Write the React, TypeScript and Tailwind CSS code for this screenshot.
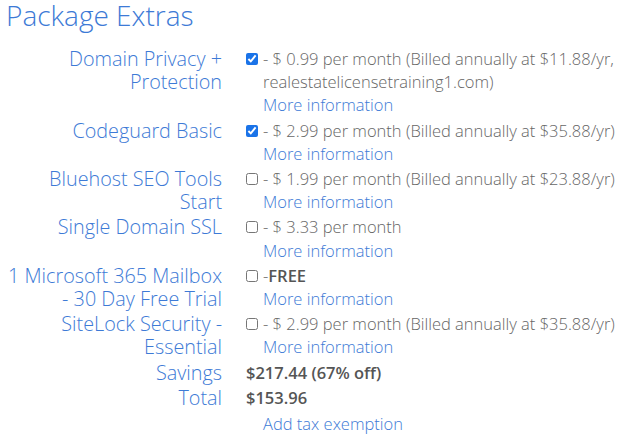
import React from "react";

type Row = {
  label: string;
  checked?: boolean;
  desc?: React.ReactNode;
};

const rows: Row[] = [
  {
    label: "Domain Privacy + Protection",
    checked: true,
    desc: "- $ 0.99 per month (Billed annually at $11.88/yr, realestatelicensetraining1.com)",
  },
  { label: "Codeguard Basic", checked: true, desc: "- $ 2.99 per month (Billed annually at $35.88/yr)" },
  { label: "Bluehost SEO Tools Start", desc: "- $ 1.99 per month (Billed annually at $23.88/yr)" },
  { label: "Single Domain SSL", desc: "- $ 3.33 per month" },
  {
    label: "1 Microsoft 365 Mailbox - 30 Day Free Trial",
    desc: (
      <>
        -<span className="font-semibold text-[#555]">FREE</span>
      </>
    ),
  },
  { label: "SiteLock Security - Essential", desc: "- $ 2.99 per month (Billed annually at $35.88/yr)" },
];

function Box({ checked }: { checked?: boolean }) {
  return (
    <div className="w-[17px] shrink-0 pt-[6px]">
      <input
        type="checkbox"
        defaultChecked={checked}
        className="m-0 block h-[12px] w-[12px] accent-[#1a73e8]"
      />
    </div>
  );
}

const labelCls =
  "ml-[6px] w-[216px] shrink-0 text-right text-[19.8px] font-light leading-[23.2px] text-[#3d7ad6]";

export default function App() {
  return (
    <div
      className="min-h-[445px] w-[637px] bg-white pt-[1px] text-[#666]"
      style={{ fontFamily: '"Open Sans", sans-serif' }}
    >
      <h1 className="-mt-[3px] pl-[6px] text-[28px] font-light leading-[34px] text-[#3d7ad6]">Package Extras</h1>
      <div className="mt-[15px] flex flex-col gap-[2px]">
        {rows.map((r, i) => (
          <div key={i} className="flex">
            <div className={labelCls}>{r.label}</div>
            <div className="ml-[24px] flex min-w-0 flex-1 pr-[4px] text-[16.5px] font-light leading-[23.2px]">
              <Box checked={r.checked} />
              <div className="min-w-0 flex-1">
                <div>{r.desc}</div>
                <a className="block text-[#3d7ad6]" href="#">
                  More information
                </a>
              </div>
            </div>
          </div>
        ))}
        <div className="flex">
          <div className={labelCls}>Savings</div>
          <div className="ml-[24px] text-[16.5px] font-semibold leading-[23.2px] text-[#555]">$217.44 (67% off)</div>
        </div>
        <div className="flex">
          <div className={labelCls}>Total</div>
          <div className="ml-[24px] text-[16.5px] font-semibold leading-[23.2px] text-[#555]">$153.96</div>
        </div>
        <div className="mt-[1px] flex">
          <div className="ml-[6px] w-[216px] shrink-0" />
          <a href="#" className="ml-[41px] text-[16.5px] font-light leading-[23.2px] text-[#3d7ad6]">
            Add tax exemption
          </a>
        </div>
      </div>
    </div>
  );
}
